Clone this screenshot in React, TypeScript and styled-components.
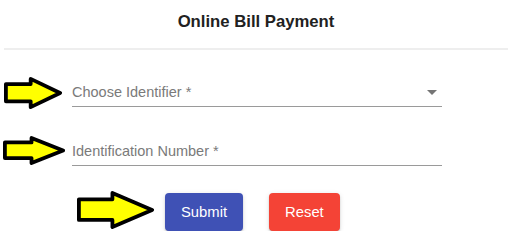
import React from "react";
import styled, { createGlobalStyle } from "styled-components";

const GlobalStyle = createGlobalStyle`
  html, body {
    margin: 0;
    padding: 0;
    background: #ffffff;
    font-family: "Liberation Sans", Arial, sans-serif;
  }
`;

const Page = styled.div`
  width: 511px;
  display: flex;
  flex-direction: column;
`;

const Header = styled.header`
  margin: 0 3px 0 4px;
  padding: 12px 0 16px;
  border-bottom: 2px solid #eeeeee;
  text-align: center;
`;

const Title = styled.h1`
  margin: 0;
  font-size: 16.7px;
  line-height: 20px;
  font-weight: 700;
  color: #212121;
`;

const Form = styled.form`
  display: flex;
  flex-direction: column;
`;

const Row = styled.div<{ $top: number; $left: number; $gap: number }>`
  display: flex;
  align-items: flex-start;
  margin-top: ${(p) => p.$top}px;
  padding-left: ${(p) => p.$left}px;
  gap: ${(p) => p.$gap}px;
`;

const Field = styled.div`
  width: 370px;
  margin-top: 5px;
  box-sizing: border-box;
  padding: 0 5px 4px 0;
  border-bottom: 1px solid #9a9a9a;
  display: flex;
  align-items: center;
  justify-content: space-between;
`;

const Label = styled.span`
  font-size: 14.5px;
  line-height: 20px;
  color: #7a7a7a;
`;

const Actions = styled.div`
  display: flex;
  gap: 26px;
  margin-top: 2px;
`;

const Button = styled.button<{ $bg: string }>`
  height: 38px;
  padding: 0 16px;
  border: none;
  border-radius: 4px;
  background: ${(p) => p.$bg};
  color: #ffffff;
  font-family: "Liberation Sans", Arial, sans-serif;
  font-size: 14.8px;
  font-weight: 400;
  box-shadow: 0 3px 1px -2px rgba(0, 0, 0, 0.2), 0 2px 2px 0 rgba(0, 0, 0, 0.14),
    0 1px 5px 0 rgba(0, 0, 0, 0.12);
  cursor: pointer;
`;

const ArrowSvg = styled.svg`
  display: block;
  flex: none;
`;

function Arrow({ w, h }: { w: number; h: number }) {
  const s = 1.9;
  const shaftTop = h * 0.22;
  const shaftBot = h * 0.76;
  const back = w * 0.46;
  const pts = [
    [s, shaftTop],
    [back, shaftTop],
    [back, s],
    [w - s, h / 2],
    [back, h - s],
    [back, shaftBot],
    [s, shaftBot],
  ]
    .map((p) => p.join(","))
    .join(" ");
  return (
    <ArrowSvg width={w} height={h} viewBox={`0 0 ${w} ${h}`}>
      <polygon
        points={pts}
        fill="#ffff00"
        stroke="#000000"
        strokeWidth={3.8}
        strokeLinejoin="round"
      />
    </ArrowSvg>
  );
}

const DropIcon = () => (
  <svg width="10" height="5" viewBox="0 0 10 5">
    <path d="M0 0 L5 5 L10 0 Z" fill="#757575" />
  </svg>
);

export default function App() {
  return (
    <Page>
      <GlobalStyle />
      <Header>
        <Title>Online Bill Payment</Title>
      </Header>
      <Form onSubmit={(e) => e.preventDefault()}>
        <Row $top={27} $left={4} $gap={10}>
          <Arrow w={58} h={32} />
          <Field>
            <Label>Choose Identifier *</Label>
            <DropIcon />
          </Field>
        </Row>
        <Row $top={27} $left={3} $gap={7}>
          <Arrow w={62} h={29} />
          <Field>
            <Label>Identification Number *</Label>
          </Field>
        </Row>
        <Row $top={25} $left={77} $gap={11}>
          <Arrow w={77} h={38} />
          <Actions>
            <Button type="submit" $bg="#3f51b5">
              Submit
            </Button>
            <Button type="reset" $bg="#f44336">
              Reset
            </Button>
          </Actions>
        </Row>
      </Form>
    </Page>
  );
}
